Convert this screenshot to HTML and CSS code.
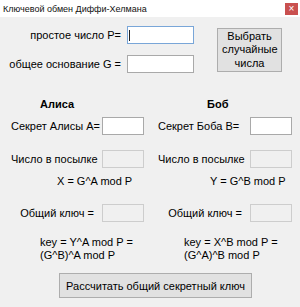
FILE: index.html
```html
<!DOCTYPE html>
<html lang="ru">
<head>
    <meta charset="UTF-8">
    <meta name="viewport" content="width=device-width, initial-scale=1.0">
    <title>Ключевой обмен Диффи-Хелмана</title>
    <link rel="stylesheet" href="styles.css">
</head>
<body>
    <div class="window">
        <div class="titlebar">
            <span class="title">Ключевой обмен Диффи-Хелмана</span>
            <span class="close">×</span>
        </div>

        <div class="top">
            <div class="params">
                <label for="p">простое число P=</label>
                <input type="text" id="p" class="textbox focused">
                <label for="g">общее основание G =</label>
                <input type="text" id="g" class="textbox">
            </div>
            <button class="btn random-btn">Выбрать случайные числа</button>
        </div>

        <div class="parties">
            <div class="party alice">
                <div class="name">Алиса</div>
                <div class="row">
                    <label for="a">Секрет Алисы A=</label>
                    <input type="text" id="a" class="textbox small">
                </div>
                <div class="row sent">
                    <label>Число в посылке</label>
                    <input type="text" class="textbox small" disabled>
                </div>
                <div class="formula">X = G^A mod P</div>
                <div class="row key">
                    <label>Общий ключ =</label>
                    <input type="text" class="textbox small" disabled>
                </div>
                <div class="key-formula">key = Y^A mod P =<br>(G^B)^A mod P</div>
            </div>

            <div class="party bob">
                <div class="name">Боб</div>
                <div class="row">
                    <label for="b">Секрет Боба B=</label>
                    <input type="text" id="b" class="textbox small">
                </div>
                <div class="row sent">
                    <label>Число в посылке</label>
                    <input type="text" class="textbox small" disabled>
                </div>
                <div class="formula">Y = G^B mod P</div>
                <div class="row key">
                    <label>Общий ключ =</label>
                    <input type="text" class="textbox small" disabled>
                </div>
                <div class="key-formula">key = X^B mod P =<br>(G^A)^B mod P</div>
            </div>
        </div>

        <div class="bottom">
            <button class="btn calc-btn">Рассчитать общий секретный ключ</button>
        </div>
    </div>
</body>
</html>
```

FILE: styles.css
```css
body {
    margin: 0;
    background: #f0f0f0;
    font-family: 'Liberation Sans', Arial, sans-serif;
    font-size: 11px;
    color: #000;
}

.window {
    width: 300px;
    height: 307px;
    display: flex;
    flex-direction: column;
    overflow: hidden;
}

.titlebar {
    height: 17px;
    background: #fff;
    display: flex;
    align-items: center;
    justify-content: space-between;
    padding-left: 3px;
    flex-shrink: 0;
}

.title {
    font-size: 9px;
    color: #111;
}

.close {
    width: 13px;
    height: 12px;
    margin-right: 2px;
    background: #c9504f;
    color: #fff;
    font-size: 10px;
    line-height: 12px;
    text-align: center;
}

.textbox {
    box-sizing: border-box;
    height: 18px;
    margin: 0;
    padding: 0 2px;
    background: #fff;
    border: 1px solid #a9a9a9;
    font: inherit;
    outline: none;
}

.textbox.focused {
    border-color: #79a6d8;
    background: linear-gradient(#222, #222) no-repeat 1px 3px / 1px 11px, #fff;
}

.textbox:disabled {
    background: #f0f0f0;
    border-color: #cdcdcd;
}

.textbox.small {
    width: 42px;
}

.btn {
    box-sizing: border-box;
    margin: 0;
    padding: 0;
    background: #e1e1e1;
    border: 1px solid #adadad;
    font: inherit;
    color: #000;
}

/* верхний блок */
.top {
    display: flex;
    align-items: flex-start;
}

.params {
    display: grid;
    grid-template-columns: 121px 67px;
    column-gap: 6px;
    row-gap: 11px;
    align-items: center;
    margin-top: 9px;
}

.params label {
    text-align: right;
    white-space: nowrap;
}

.random-btn {
    width: 65px;
    height: 44px;
    margin: 11px 0 0 23px;
    line-height: 13.5px;
    padding: 0 4px;
}

/* Алиса и Боб */
.parties {
    display: grid;
    grid-template-columns: 150px 150px;
    margin-top: 23px;
}

.party {
    display: flex;
    flex-direction: column;
    line-height: 16px;
    white-space: nowrap;
}

.name {
    font-weight: bold;
}

.row {
    display: flex;
    align-items: center;
    justify-content: space-between;
    margin-top: 5px;
}

.row.sent {
    margin-top: 15px;
}

.row.key {
    justify-content: flex-end;
    gap: 8px;
    margin-top: 15px;
}

.formula {
    margin-top: 5px;
}

.key-formula {
    margin-top: 14px;
    line-height: 13px;
}

.alice {
    padding: 0 6px 0 11px;
}

.alice .name {
    padding-left: 29px;
}

.alice .formula {
    padding-left: 46px;
}

.alice .key-formula {
    padding-left: 29px;
}

.bob {
    padding: 0 8px 0 8px;
}

.bob .name {
    padding-left: 49px;
}

.bob .formula {
    padding-left: 52px;
}

.bob .key-formula {
    padding-left: 26px;
}

.bottom {
    display: flex;
    padding-left: 59px;
    margin-top: 11px;
}

.calc-btn {
    width: 193px;
    height: 25px;
}
```
